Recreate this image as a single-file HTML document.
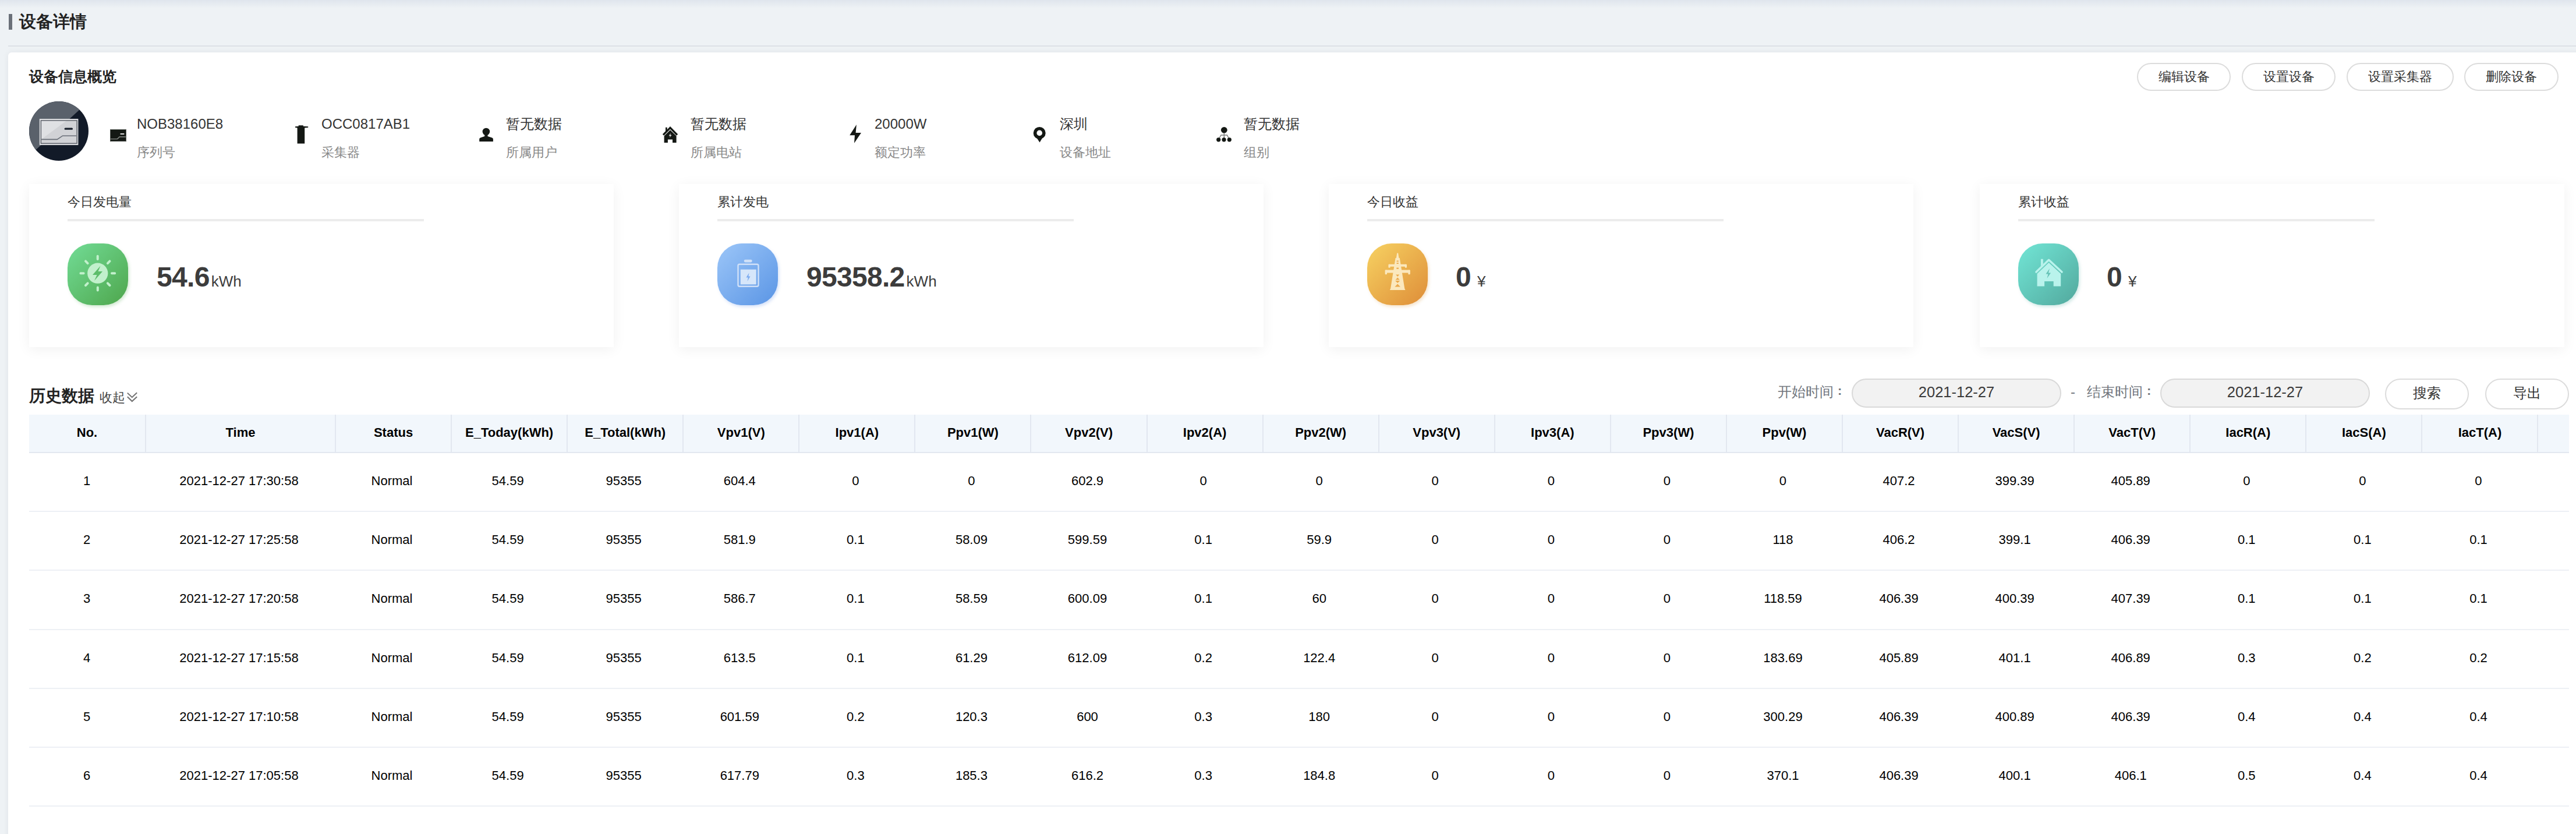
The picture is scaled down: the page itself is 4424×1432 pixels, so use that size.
<!DOCTYPE html>
<html><head><meta charset="utf-8">
<style>
html,body{margin:0;padding:0}
body{width:4424px;height:1432px;overflow:hidden;position:relative;background:#eef2f5;font-family:"Liberation Sans",sans-serif;color:#333}
.abs{position:absolute}
.topsh{left:0;top:0;width:4424px;height:14px;background:linear-gradient(#dfe5ed,rgba(238,242,245,0))}
.tbar{left:15px;top:24px;width:6px;height:27px;background:#6a7079}
.ttl{left:33px;top:17px;font-size:29px;line-height:40px;font-weight:bold;color:#222;white-space:nowrap}
.sep{left:14px;top:78px;width:4420px;height:2px;background:#dde1e6}
.card{left:14px;top:90px;width:4440px;height:1400px;background:#fff;border-radius:6px;box-shadow:0 0 12px rgba(0,20,50,0.06)}
.h2{font-size:25px;line-height:30px;font-weight:bold;color:#222;white-space:nowrap}
.btn{height:44px;border:2px solid #dcdcdc;border-radius:24px;background:#fff;font-size:22px;line-height:44px;text-align:center;color:#333;white-space:nowrap}
.val{font-size:24px;line-height:28px;color:#333;white-space:nowrap}
.lbl{font-size:22px;line-height:26px;color:#888;white-space:nowrap}
.sc{top:316px;width:1004px;height:280px;background:#fff;box-shadow:0 4px 22px rgba(0,0,0,0.06)}
.sct{left:66px;top:18px;font-size:22px;line-height:26px;color:#333;white-space:nowrap}
.scb{left:66px;top:60px;width:612px;height:4px;background:#ececec}
.ico{left:66px;top:102px;width:104px;height:106px;border-radius:42px}
.num{top:132px;font-size:48px;line-height:56px;font-weight:bold;color:#3c3c3c;white-space:nowrap;letter-spacing:-0.7px}
.unit{font-size:26px;font-weight:normal;color:#3c3c3c;margin-left:3px;letter-spacing:0}
table{border-collapse:collapse;table-layout:fixed}
.th th{height:61px;padding:0 0 3px 0;background:#f2f7fc;border-right:2px solid #e2e7f0;border-bottom:2px solid #e2e7f0;font-size:22px;font-weight:bold;color:#000;text-align:center;white-space:nowrap;overflow:hidden}
.th th.gut{border-right:0}
.tb td:first-child{padding-right:2px}
.tb td{height:96.2px;padding:0 5px 3px 0;border-bottom:2px solid #edf0f5;font-size:22px;color:#000;text-align:center;white-space:nowrap;overflow:hidden}
.colon{position:relative;top:-3px;margin-left:7px;font-size:22px;font-weight:bold}
.lab2{font-size:24px;line-height:30px;color:#72777e;white-space:nowrap}
.inp{height:46px;border:2px solid #d9d9d9;border-radius:26px;background:#f2f2f2;font-size:25.5px;line-height:43px;text-align:center;color:#3a3a3a;white-space:nowrap}
</style></head><body>
<div class="abs topsh"></div>
<div class="abs tbar"></div>
<div class="abs ttl">设备详情</div>
<div class="abs sep"></div>
<div class="abs card"></div>
<div class="abs h2" style="left:50px;top:116px">设备信息概览</div>

<div class="abs btn" style="left:3670px;top:108px;width:157px">编辑设备</div>
<div class="abs btn" style="left:3850px;top:108px;width:157px">设置设备</div>
<div class="abs btn" style="left:4030px;top:108px;width:180px">设置采集器</div>
<div class="abs btn" style="left:4232px;top:108px;width:158px">删除设备</div>

<!-- device info -->
<div class="abs val" style="left:235px;top:199px">NOB38160E8</div>
<div class="abs lbl" style="left:235px;top:249px">序列号</div>
<div class="abs val" style="left:552px;top:199px">OCC0817AB1</div>
<div class="abs lbl" style="left:552px;top:249px">采集器</div>
<div class="abs val" style="left:869px;top:199px">暂无数据</div>
<div class="abs lbl" style="left:869px;top:249px">所属用户</div>
<div class="abs val" style="left:1186px;top:199px">暂无数据</div>
<div class="abs lbl" style="left:1186px;top:249px">所属电站</div>
<div class="abs val" style="left:1502px;top:199px">20000W</div>
<div class="abs lbl" style="left:1502px;top:249px">额定功率</div>
<div class="abs val" style="left:1820px;top:199px">深圳</div>
<div class="abs lbl" style="left:1820px;top:249px">设备地址</div>
<div class="abs val" style="left:2136px;top:199px">暂无数据</div>
<div class="abs lbl" style="left:2136px;top:249px">组别</div>

<!-- stat cards -->
<div class="abs sc" style="left:50px">
  <div class="abs sct">今日发电量</div><div class="abs scb"></div>
  <div class="abs ico" style="background:linear-gradient(135deg,#72dc96,#4ea64c);box-shadow:2px 3px 5px rgba(80,170,80,0.25)"><svg width="104" height="106" viewBox="0 0 104 106">
<g fill="none" stroke="#c2f0cc" stroke-width="4" stroke-linecap="round">
<path d="M76.0,51.2 L81.2,51.2 M68.9,68.3 L72.5,72.0 M51.8,75.4 L51.8,80.6 M34.6,68.3 L31.0,72.0 M27.6,51.2 L22.4,51.2 M34.6,34.1 L31.0,30.4 M51.7,27.0 L51.7,21.8 M68.9,34.1 L72.5,30.4"/>
</g>
<circle cx="51.75" cy="51.2" r="17.6" fill="#c2f0cc"/>
<polygon points="56.5,38.5 43,54 50.5,54 46,64 60,48 52.5,48" fill="#5cbd6a"/>
</svg></div>
  <div class="abs num" style="left:219px">54.6<span class="unit">kWh</span></div>
</div>
<div class="abs sc" style="left:1166px">
  <div class="abs sct">累计发电</div><div class="abs scb"></div>
  <div class="abs ico" style="background:linear-gradient(135deg,#9cc6f8,#5a95e5);box-shadow:2px 3px 5px rgba(90,140,230,0.25)"><svg width="104" height="106" viewBox="0 0 104 106">
<rect x="45.7" y="27.8" width="14" height="4.6" rx="2.3" fill="#cfe0f8"/>
<rect x="35.5" y="35.7" width="35" height="38.1" rx="2.5" fill="none" stroke="#cfe0f8" stroke-width="2.4"/>
<rect x="39.8" y="44.7" width="26.9" height="25.7" fill="#d6e6fa"/>
<polygon points="54.5,50.5 49.5,58.5 52.8,58.5 51.5,65 56.5,56.5 53.3,56.5" fill="#7aaaf0"/>
</svg></div>
  <div class="abs num" style="left:219px">95358.2<span class="unit">kWh</span></div>
</div>
<div class="abs sc" style="left:2282px">
  <div class="abs sct">今日收益</div><div class="abs scb"></div>
  <div class="abs ico" style="background:linear-gradient(135deg,#f7d262,#de8d38);box-shadow:2px 3px 5px rgba(220,150,60,0.25)"><svg width="104" height="106" viewBox="0 0 104 106">
<g fill="#fbe8bd">
<polygon points="51.3,16.6 53.1,16.6 55,28 49.4,28"/>
<polygon points="48.6,25 55.8,25 64.3,77.5 65.5,80 38.9,80 40.1,77.5"/>
<rect x="37" y="35.8" width="30.6" height="4" rx="1"/>
<rect x="36.4" y="35.8" width="3.2" height="6" rx="1.2"/>
<rect x="64.8" y="35.8" width="3.2" height="6" rx="1.2"/>
<rect x="31" y="45.4" width="42.4" height="5" rx="1"/>
<rect x="30.6" y="45.4" width="3.4" height="7.8" rx="1.2"/>
<rect x="70.4" y="45.4" width="3.4" height="7.8" rx="1.2"/>
</g>
<g fill="#eba94c">
<rect x="50.6" y="29.5" width="3.2" height="1.8"/>
<rect x="50.6" y="33.2" width="3.2" height="1.8"/>
<rect x="50.4" y="41.6" width="3.6" height="2.2"/>
<polygon points="49.2,53.5 55.2,53.5 52.2,57"/>
<polygon points="52.2,58.6 48.6,62.5 55.8,62.5"/>
<polygon points="48.2,64 56.2,64 52.2,68"/>
<polygon points="52.2,69.6 47.4,74.5 57,74.5"/>
</g>
</svg></div>
  <div class="abs num" style="left:218px">0<span class="unit" style="margin-left:11px">¥</span></div>
</div>
<div class="abs sc" style="left:3400px">
  <div class="abs sct">累计收益</div><div class="abs scb"></div>
  <div class="abs ico" style="background:linear-gradient(135deg,#72e6d6,#52a89d);box-shadow:2px 3px 5px rgba(80,170,160,0.25)"><svg width="104" height="106" viewBox="0 0 104 106">
<path d="M38.9,26.8 h3.9 v8.5 l-3.9,3.9Z" fill="#b9f3ec"/>
<path d="M31,49 L52.6,28.3 L75,49" fill="none" stroke="#b9f3ec" stroke-width="3.6" stroke-linecap="round" stroke-linejoin="round"/>
<path d="M32.6,52 L52.6,33 L73.2,52 V73.5 H60.7 V65 H45.1 V73.5 H32.6Z" fill="#b9f3ec"/>
<polygon points="54,43 47.5,52.5 51.5,52.5 49.5,60 56,50.5 52,50.5" fill="#66c2b6"/>
</svg></div>
  <div class="abs num" style="left:218px">0<span class="unit" style="margin-left:11px">¥</span></div>
</div>

<!-- history -->
<div class="abs" style="left:50px;top:660px;font-size:28px;line-height:40px;font-weight:bold;color:#222;white-space:nowrap">历史数据</div>
<div class="abs" style="left:171px;top:668px;font-size:22px;line-height:30px;color:#444;white-space:nowrap">收起</div>

<div class="abs lab2" style="left:3053px;top:658px">开始时间<span class="colon">:</span></div>
<div class="abs inp" style="left:3180px;top:650px;width:356px">2021-12-27</div>
<div class="abs lab2" style="left:3556px;top:658px">-</div>
<div class="abs lab2" style="left:3584px;top:658px">结束时间<span class="colon">:</span></div>
<div class="abs inp" style="left:3710px;top:650px;width:356px">2021-12-27</div>
<div class="abs btn" style="left:4096px;top:650px;width:140px;height:49px;line-height:45px;border-radius:28px;font-size:24px">搜索</div>
<div class="abs btn" style="left:4268px;top:650px;width:140px;height:49px;line-height:45px;border-radius:28px;font-size:24px">导出</div>
<!-- ICONS -->
<svg class="abs" style="left:50px;top:174px" width="102" height="102" viewBox="0 0 102 102">
<defs><clipPath id="avc"><circle cx="51" cy="51" r="51"/></clipPath><clipPath id="avr"><rect x="21" y="33.5" width="60.6" height="38.6"/></clipPath></defs>
<g clip-path="url(#avc)"><rect width="102" height="102" fill="#121a28"/><polygon points="0,0 102,0 102,0.2 0,93.8" fill="#5a616b"/></g>
<rect x="18.8" y="31" width="64.6" height="43.1" fill="#d1d2d6" stroke="#dddee1" stroke-width="2"/>
<g clip-path="url(#avr)"><polygon points="0,0 66,0 66,32 21.3,65 0,65" fill="#dfe0e3"/></g>
<rect x="20.4" y="32.9" width="61.7" height="39.3" fill="none" stroke="#50555e" stroke-width="1.3"/>
<rect x="60.6" y="45.5" width="14.4" height="3.2" rx="1.5" fill="#1a202c"/>
<polyline points="21.3,65.4 48.2,65.4 57.5,59.2 81,59.2" fill="none" stroke="#686d76" stroke-width="1.6"/>
</svg>
<svg class="abs" style="left:189px;top:222px" width="28" height="21" viewBox="0 0 28 21">
<rect x="0.5" y="0.5" width="27" height="20" fill="#141814" stroke="#555a55" stroke-width="1"/>
<rect x="17.4" y="6.9" width="7.2" height="2.1" rx="1" fill="#e0e0e0"/>
<polyline points="0.6,16.6 12.6,16.6 16.2,13 27,13" fill="none" stroke="#8a8e8a" stroke-width="1.4"/>
</svg>
<svg class="abs" style="left:505px;top:213px" width="26" height="36" viewBox="0 0 26 36">
<path d="M7.7,2.2 H15.8 V3.7 L24.2,4.3 V5.9 L18.2,6.5 V33.4 H5.6 V6.5 L2,5.9 V4.3 L7.7,3.7Z" fill="#141814"/>
</svg>
<svg class="abs" style="left:820px;top:217px" width="30" height="28" viewBox="0 0 30 28">
<circle cx="14.9" cy="9" r="6.3" fill="#141814"/>
<path d="M12.3,13 h5.2 v4 l7.6,2.4 q1.8,0.6 1.8,2.4 V26 H3.2 V21.8 q0,-1.8 1.8,-2.4 L12.3,17Z" fill="#141814"/>
</svg>
<svg class="abs" style="left:1136px;top:216px" width="30" height="32" viewBox="0 0 30 32">
<path d="M7,2.8 h2.7 v5.2 L7,10.6Z" fill="#141814"/>
<path d="M3,15.6 L15,3.4 L27,15.6" fill="none" stroke="#141814" stroke-width="3.4"/>
<path d="M4.6,17.6 L15,7.2 L25.6,17.6 V28.9 H19 V23.5 H10.9 V28.9 H4.6Z" fill="#141814"/>
<path d="M16,12.6 L12.6,17.2 H15 L13.8,20.6 L17.6,15.8 H15.2Z" fill="#e8e8e8"/>
</svg>
<svg class="abs" style="left:1455px;top:212px" width="28" height="36" viewBox="0 0 28 36">
<polygon points="15.9,2 4.2,20.3 13,20.3 12,33.8 24,16.1 14.6,16.1" fill="#141814"/>
</svg>
<svg class="abs" style="left:1772px;top:215px" width="28" height="32" viewBox="0 0 28 32">
<path fill-rule="evenodd" d="M13.2,2.9 a10.5,10.5 0 1,1 0,21 a10.5,10.5 0 1,1 0,-21Z M13.2,8.6 a4.8,4.8 0 1,0 0,9.6 a4.8,4.8 0 1,0 0,-9.6Z" fill="#141814"/>
<polygon points="9,22.5 17.8,22.5 13.5,29.4" fill="#141814"/>
</svg>
<svg class="abs" style="left:2085px;top:214px" width="34" height="32" viewBox="0 0 34 32">
<circle cx="17.3" cy="9.3" r="5.4" fill="#141814"/>
<path d="M17.3,14 V25 M8.5,24 L12,18 H22.5 L25.5,24" fill="none" stroke="#7a7c7a" stroke-width="1.4"/>
<circle cx="7.7" cy="25.8" r="3.6" fill="#141814"/>
<circle cx="17" cy="25.8" r="3.6" fill="#141814"/>
<circle cx="26.3" cy="25.8" r="3.6" fill="#141814"/>
</svg>
<svg class="abs" style="left:217px;top:671px" width="20" height="22" viewBox="0 0 20 22">
<path d="M1.8,3.6 L9.8,11.2 L18.2,3.3 M1.8,10.2 L9.8,18 L18.2,10.2" fill="none" stroke="#707070" stroke-width="2"/>
</svg>
<!-- /ICONS -->
<!-- TABLE -->
<table class="abs th" style="left:50px;top:712px;width:4362px"><colgroup><col style="width:200px"><col style="width:326px"><col style="width:199.08px"><col style="width:199.08px"><col style="width:199.08px"><col style="width:199.08px"><col style="width:199.08px"><col style="width:199.08px"><col style="width:199.08px"><col style="width:199.08px"><col style="width:199.08px"><col style="width:199.08px"><col style="width:199.08px"><col style="width:199.08px"><col style="width:199.08px"><col style="width:199.08px"><col style="width:199.08px"><col style="width:199.08px"><col style="width:199.08px"><col style="width:199.08px"><col style="width:199.08px"><col style="width:54px"></colgroup><tr><th>No.</th><th>Time</th><th>Status</th><th>E_Today(kWh)</th><th>E_Total(kWh)</th><th>Vpv1(V)</th><th>Ipv1(A)</th><th>Ppv1(W)</th><th>Vpv2(V)</th><th>Ipv2(A)</th><th>Ppv2(W)</th><th>Vpv3(V)</th><th>Ipv3(A)</th><th>Ppv3(W)</th><th>Ppv(W)</th><th>VacR(V)</th><th>VacS(V)</th><th>VacT(V)</th><th>IacR(A)</th><th>IacS(A)</th><th>IacT(A)</th><th class="gut"></th></tr></table>
<table class="abs tb" style="left:50px;top:778px;width:4362px"><colgroup><col style="width:200px"><col style="width:326px"><col style="width:199.08px"><col style="width:199.08px"><col style="width:199.08px"><col style="width:199.08px"><col style="width:199.08px"><col style="width:199.08px"><col style="width:199.08px"><col style="width:199.08px"><col style="width:199.08px"><col style="width:199.08px"><col style="width:199.08px"><col style="width:199.08px"><col style="width:199.08px"><col style="width:199.08px"><col style="width:199.08px"><col style="width:199.08px"><col style="width:199.08px"><col style="width:199.08px"><col style="width:199.08px"><col style="width:54px"></colgroup><tr><td>1</td><td>2021-12-27 17:30:58</td><td>Normal</td><td>54.59</td><td>95355</td><td>604.4</td><td>0</td><td>0</td><td>602.9</td><td>0</td><td>0</td><td>0</td><td>0</td><td>0</td><td>0</td><td>407.2</td><td>399.39</td><td>405.89</td><td>0</td><td>0</td><td>0</td><td></td></tr><tr><td>2</td><td>2021-12-27 17:25:58</td><td>Normal</td><td>54.59</td><td>95355</td><td>581.9</td><td>0.1</td><td>58.09</td><td>599.59</td><td>0.1</td><td>59.9</td><td>0</td><td>0</td><td>0</td><td>118</td><td>406.2</td><td>399.1</td><td>406.39</td><td>0.1</td><td>0.1</td><td>0.1</td><td></td></tr><tr><td>3</td><td>2021-12-27 17:20:58</td><td>Normal</td><td>54.59</td><td>95355</td><td>586.7</td><td>0.1</td><td>58.59</td><td>600.09</td><td>0.1</td><td>60</td><td>0</td><td>0</td><td>0</td><td>118.59</td><td>406.39</td><td>400.39</td><td>407.39</td><td>0.1</td><td>0.1</td><td>0.1</td><td></td></tr><tr><td>4</td><td>2021-12-27 17:15:58</td><td>Normal</td><td>54.59</td><td>95355</td><td>613.5</td><td>0.1</td><td>61.29</td><td>612.09</td><td>0.2</td><td>122.4</td><td>0</td><td>0</td><td>0</td><td>183.69</td><td>405.89</td><td>401.1</td><td>406.89</td><td>0.3</td><td>0.2</td><td>0.2</td><td></td></tr><tr><td>5</td><td>2021-12-27 17:10:58</td><td>Normal</td><td>54.59</td><td>95355</td><td>601.59</td><td>0.2</td><td>120.3</td><td>600</td><td>0.3</td><td>180</td><td>0</td><td>0</td><td>0</td><td>300.29</td><td>406.39</td><td>400.89</td><td>406.39</td><td>0.4</td><td>0.4</td><td>0.4</td><td></td></tr><tr><td>6</td><td>2021-12-27 17:05:58</td><td>Normal</td><td>54.59</td><td>95355</td><td>617.79</td><td>0.3</td><td>185.3</td><td>616.2</td><td>0.3</td><td>184.8</td><td>0</td><td>0</td><td>0</td><td>370.1</td><td>406.39</td><td>400.1</td><td>406.1</td><td>0.5</td><td>0.4</td><td>0.4</td><td></td></tr></table>
<!-- /TABLE -->
</body></html>
